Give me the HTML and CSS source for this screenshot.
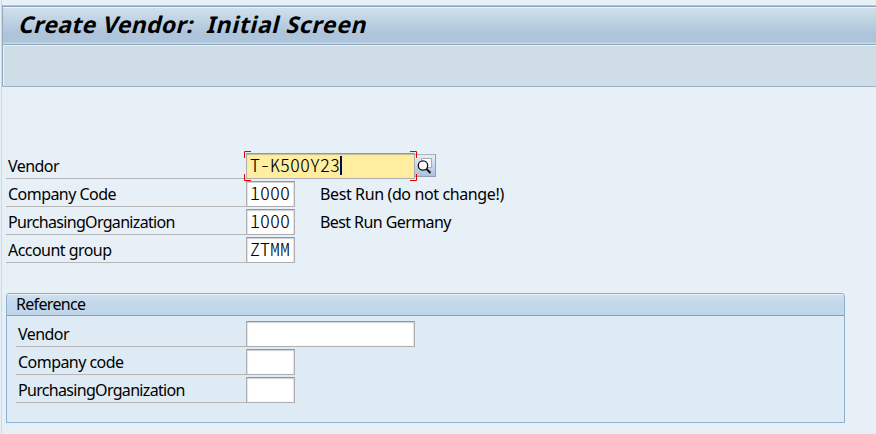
FILE: index.html
```html
<!DOCTYPE html>
<html lang="en">
<head>
<meta charset="utf-8">
<title>Create Vendor: Initial Screen</title>
<link rel="stylesheet" href="styles.css">
</head>
<body>
<main class="window">
  <header class="titlebar"><h1><span class="t1">Create Vendor:</span><span class="t2">Initial Screen</span></h1></header>
  <div class="toolbar"></div>
  <section class="form">
    <div class="row">
      <div class="label"><span class="w-vendor">Vendor</span></div>
      <div class="field long active"><span>T-K500Y23</span><i class="caret"></i>
        <svg class="focus" width="173" height="30" viewBox="0 0 173 30" fill="none" stroke="#e00000"><path d="M.5 7V.5H7M166 .5h6.500V7M172.500 23v6.500H166M7 29.500H.5V23"/></svg>
      </div>
      <div class="help"><svg width="20" height="21" viewBox="0 0 20 21"><path d="M6.500 3.500h10v9h-10z" fill="#fff" stroke="#a5a9ad"/><circle cx="8" cy="10.500" r="4.700" fill="#fff" stroke="#111" stroke-width="1.300"/><path d="M11.500 14l4 4" stroke="#111" stroke-width="2"/></svg></div>
    </div>
    <div class="row">
      <div class="label"><span class="w-code">Company Code</span></div>
      <div class="field"><span>1000</span></div>
      <div class="desc"><span class="w-desc1">Best Run (do not change!)</span></div>
    </div>
    <div class="row">
      <div class="label"><span class="w-org">PurchasingOrganization</span></div>
      <div class="field"><span>1000</span></div>
      <div class="desc"><span class="w-desc2">Best Run Germany</span></div>
    </div>
    <div class="row">
      <div class="label"><span class="w-group">Account group</span></div>
      <div class="field"><span>ZTMM</span></div>
    </div>
  </section>
  <section class="panel">
    <h2><span class="w-ref">Reference</span></h2>
    <div class="rows">
      <div class="row"><div class="label"><span class="w-vendor">Vendor</span></div><div class="field long"></div></div>
      <div class="row"><div class="label"><span class="w-code">Company code</span></div><div class="field"></div></div>
      <div class="row"><div class="label"><span class="w-org">PurchasingOrganization</span></div><div class="field"></div></div>
    </div>
  </section>
</main>
</body>
</html>
```
FILE: styles.css
```css
* { box-sizing: border-box; }
body {
  margin: 0;
  height: 434px;
  overflow: hidden;
  background: #e8f0f7;
  color: #000;
  font: 16px/20px "Noto Sans", "Open Sans", sans-serif;
  white-space: nowrap;
}
.window {
  height: 434px;
  margin-left: 1px;
  padding-top: 5px;
  border-left: 1px solid #d0d9e3;
}
.titlebar {
  height: 40px;
  border-top: 1px solid #b8c4d2;
  border-left: 1px solid #93a9bf;
  border-bottom: 1px solid #92a9bd;
  background: linear-gradient(#8da4bb 0 1px, #eaf3f9 1px 2px, #d0e0ec 2px, #bdd1e2 16px, #aec4db 27px, #aec4db 36px, #c5d7e7 37px);
}
h1 {
  display: flex;
  margin: 0;
  padding: 3px 0 0 17px;
  font-size: 23px;
  line-height: 30px;
  font-weight: 700;
}
h1 span { transform: skewX(-14deg); }
.t1 { width: 188px; letter-spacing: .3px; }
.t2 { letter-spacing: .65px; }
.toolbar {
  height: 42px;
  border-left: 1px solid #93a9bf;
  border-bottom: 1px solid #9db2c4;
  background: #cfdde7;
  box-shadow: inset 1px 1px #e9f1f7;
}
.form { padding: 66px 0 0 4px; }
.row { display: flex; height: 26px; margin-bottom: 2px; }
.label {
  width: 240px;
  padding: 3px 0 0 2px;
  border-bottom: 1px solid #b6b6b6;
}
.w-vendor, .w-code, .w-group { letter-spacing: -.54px; }
.w-org, .w-ref { letter-spacing: -.68px; }
.w-desc1 { letter-spacing: -.38px; }
.w-desc2 { letter-spacing: -.58px; }
.field {
  position: relative;
  display: flex;
  width: 49px;
  height: 26px;
  padding: 1px 0 0 3px;
  border: 1px solid #adafb3;
  border-top-color: #92969f;
  background: #fff;
  box-shadow: inset 0 1px 1px #cfd0d5, inset 1px 0 1px #e3e4e7, inset -1px 0 1px #e3e4e7;
  font: 20px/22px "Noto Sans CJK KR", monospace;
  font-weight: 300;
  font-feature-settings: "hwid";
}
.field span { height: 22px; margin-top: -1px; transform: scaleY(.9); }
.long { width: 169px; }
.active { background: #ffee9f; box-shadow: inset 0 1px 1px #c5bd96; }
.caret { width: 2px; height: 19px; margin-top: 1px; background: #000b50; }
.focus { position: absolute; left: -3px; top: -3px; }
.help {
  width: 21px;
  height: 23px;
  margin-top: 1px;
  border: 1px solid #aab4bf;
  border-left: 0;
  border-right-color: #8fa0b3;
  border-bottom-color: #8fa0b3;
  background: linear-gradient(#e8eef4, #aac1df);
}
.help svg { display: block; }
.desc { padding: 3px 0 0 25px; }
.panel {
  width: 839px;
  height: 130px;
  margin: 30px 0 0 4px;
  border: 1px solid #8db1d2;
  border-top-color: #91aac2;
  border-radius: 4px 4px 0 0;
  background: #deebf4;
}
h2 {
  height: 22px;
  margin: 0;
  padding-left: 9px;
  border-bottom: 1px solid #839fc1;
  border-radius: 3px 3px 0 0;
  background: linear-gradient(#eaf4fb 0 1px, #cfdfed 1px, #c0d6ea 12px, #c0d6ea);
  font: inherit;
}
.rows { padding: 5px 0 0 9px; }
.panel .label { width: 230px; }
```
